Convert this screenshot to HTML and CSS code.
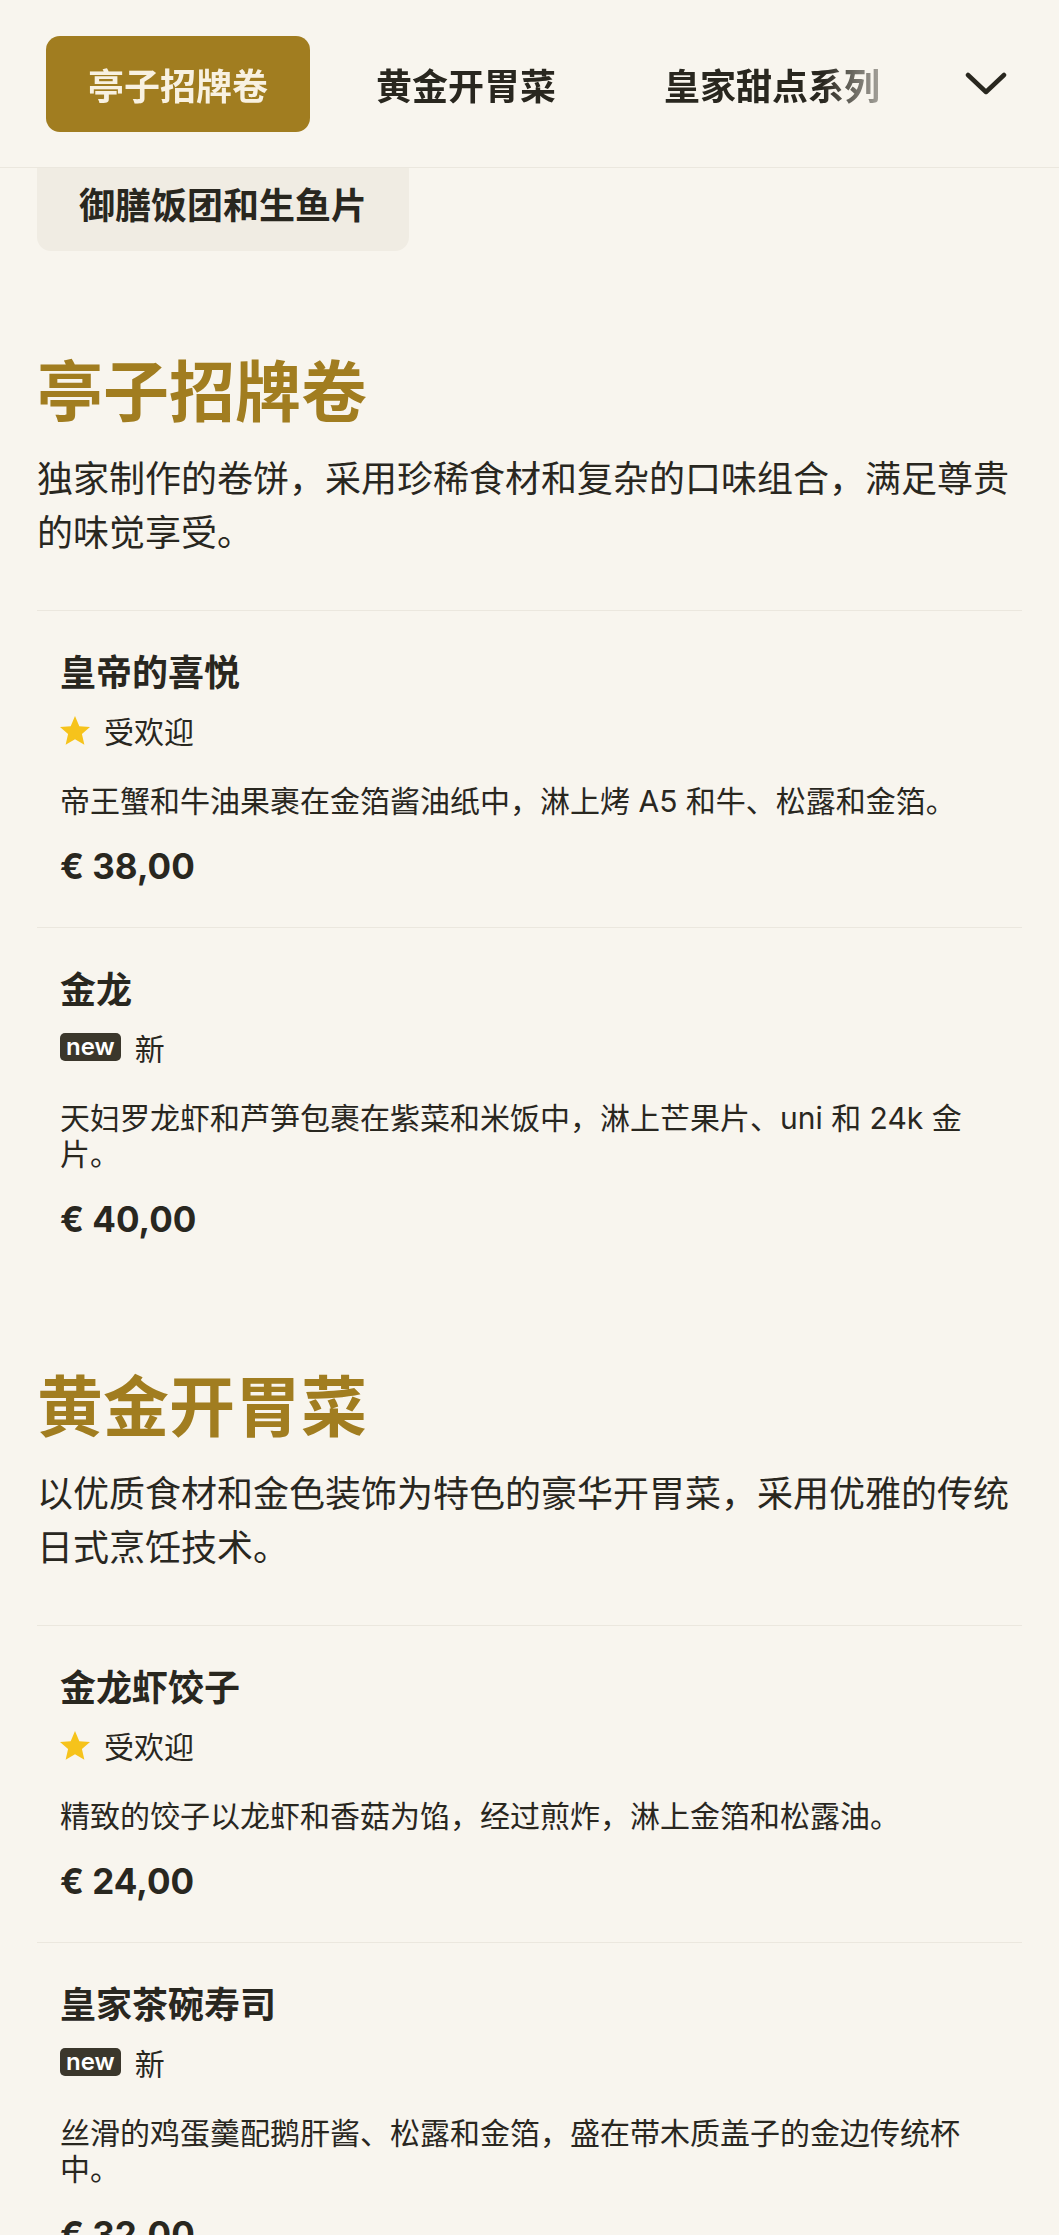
FILE: index.html
```html
<!DOCTYPE html>
<html lang="zh-CN">
  <head>
    <meta charset="UTF-8" />
    <meta name="viewport" content="width=device-width, initial-scale=1.0" />
    <title>菜单</title>
    <link rel="stylesheet" href="styles.css">
  </head>
  <body>
    <header class="menu-nav">
      <nav class="nav-tabs">
        <a class="nav-tab is-active" href="#signature">亭子招牌卷</a>
        <a class="nav-tab" href="#starters">黄金开胃菜</a>
        <a class="nav-tab" href="#desserts">皇家甜点系列</a>
      </nav>
      <button class="nav-toggle" type="button" aria-label="展开分类">
        <svg width="42" height="24" viewBox="0 0 42 24" aria-hidden="true">
          <polyline points="3,3 21,20 39,3" fill="none" stroke="currentColor" stroke-width="4.5" stroke-linecap="round" stroke-linejoin="round" />
        </svg>
      </button>
    </header>

    <main class="menu">
      <div class="category-chips">
        <a class="category-chip" href="#rice">御膳饭团和生鱼片</a>
      </div>

      <!-- signature rolls -->
      <section class="menu-section" id="signature">
        <h2 class="section-title">亭子招牌卷</h2>
        <p class="section-desc">独家制作的卷饼，采用珍稀食材和复杂的口味组合，满足尊贵的味觉享受。</p>

        <article class="menu-item">
          <h3 class="item-name">皇帝的喜悦</h3>
          <div class="item-tag">
            <svg class="star" width="30" height="29" viewBox="1.6 1.8 20.8 20" aria-hidden="true">
              <path d="M12 1.8l3 7 7.4.6-5.6 4.9 1.7 7.4L12 17.8l-6.5 3.9 1.7-7.4L1.6 9.4 9 8.8z" fill="#f6c31b" />
            </svg>
            <span>受欢迎</span>
          </div>
          <p class="item-desc">帝王蟹和牛油果裹在金箔酱油纸中，淋上烤 A5 和牛、松露和金箔。</p>
          <p class="item-price">€ 38,00</p>
        </article>

        <article class="menu-item">
          <h3 class="item-name">金龙</h3>
          <div class="item-tag">
            <span class="badge-new">new</span>
            <span>新</span>
          </div>
          <p class="item-desc">天妇罗龙虾和芦笋包裹在紫菜和米饭中，淋上芒果片、uni 和 24k 金片。</p>
          <p class="item-price">€ 40,00</p>
        </article>
      </section>

      <!-- starters -->
      <section class="menu-section" id="starters">
        <h2 class="section-title">黄金开胃菜</h2>
        <p class="section-desc">以优质食材和金色装饰为特色的豪华开胃菜，采用优雅的传统日式烹饪技术。</p>

        <article class="menu-item">
          <h3 class="item-name">金龙虾饺子</h3>
          <div class="item-tag">
            <svg class="star" width="30" height="29" viewBox="1.6 1.8 20.8 20" aria-hidden="true">
              <path d="M12 1.8l3 7 7.4.6-5.6 4.9 1.7 7.4L12 17.8l-6.5 3.9 1.7-7.4L1.6 9.4 9 8.8z" fill="#f6c31b" />
            </svg>
            <span>受欢迎</span>
          </div>
          <p class="item-desc">精致的饺子以龙虾和香菇为馅，经过煎炸，淋上金箔和松露油。</p>
          <p class="item-price">€ 24,00</p>
        </article>

        <article class="menu-item">
          <h3 class="item-name">皇家茶碗寿司</h3>
          <div class="item-tag">
            <span class="badge-new">new</span>
            <span>新</span>
          </div>
          <p class="item-desc">丝滑的鸡蛋羹配鹅肝酱、松露和金箔，盛在带木质盖子的金边传统杯中。</p>
          <p class="item-price">€ 32,00</p>
        </article>
      </section>
    </main>
  </body>
</html>
```

FILE: styles.css
```css
* {
  box-sizing: border-box;
}
body {
  margin: 0;
  background: #f8f5ee;
  color: #29271f;
  font-family: Inter, "Noto Sans CJK SC", sans-serif;
}
a {
  color: inherit;
  text-decoration: none;
}
h2,
h3,
p {
  margin: 0;
}

/* sticky category bar */
.menu-nav {
  position: sticky;
  top: 0;
  z-index: 2;
  display: flex;
  align-items: center;
  height: 168px;
  padding-left: 46px;
  background: #f8f5ee;
  border-bottom: 1px solid #ebe7de;
}
.nav-tabs {
  flex: 1;
  display: flex;
  gap: 24px;
  overflow: hidden;
  margin-right: 47px;
  -webkit-mask-image: linear-gradient(to right, #000 calc(100% - 95px), transparent);
  mask-image: linear-gradient(to right, #000 calc(100% - 95px), transparent);
}
.nav-tab {
  flex: none;
  display: flex;
  align-items: center;
  height: 96px;
  padding: 0 42px;
  border-radius: 14px;
  font-size: 36px;
  font-weight: 700;
  white-space: nowrap;
}
.nav-tab.is-active {
  background: #a17d20;
  color: #f8f1e1;
}
.nav-toggle {
  display: flex;
  align-items: center;
  justify-content: center;
  width: 42px;
  height: 42px;
  margin-right: 52px;
  padding: 0;
  border: 0;
  background: none;
  color: #29271f;
}

/* content */
.menu {
  padding: 0 37px;
}
.category-chips {
  display: flex;
  flex-wrap: wrap;
  gap: 24px;
  margin-top: -13px;
  padding-bottom: 14px;
}
.category-chip {
  display: flex;
  align-items: center;
  height: 96px;
  padding: 0 42px;
  border-radius: 14px;
  background: #f0ece3;
  font-size: 36px;
  font-weight: 700;
}
.menu-section {
  padding-top: 88px;
}
.section-title {
  font-size: 66px;
  line-height: 79px;
  font-weight: 700;
  color: #a17d20;
  margin-bottom: 20px;
}
.section-desc {
  font-size: 36px;
  line-height: 54px;
  margin-bottom: 50px;
}

.menu-item {
  padding: 41px 23px 39px;
  border-top: 1px solid #ebe7de;
}
.item-name {
  font-size: 36px;
  line-height: 43px;
  font-weight: 700;
  margin-bottom: 17px;
}
.item-tag {
  display: flex;
  align-items: center;
  gap: 14px;
  height: 36px;
  font-size: 30px;
  margin-bottom: 35px;
}
.star {
  display: block;
  flex: none;
}
.badge-new {
  display: inline-flex;
  align-items: center;
  height: 28px;
  padding: 0 6px;
  border-radius: 5px;
  background: #3b372c;
  color: #fff;
  font-size: 24px;
  font-weight: 600;
  line-height: 1;
}
.item-desc {
  font-size: 30px;
  line-height: 36px;
  margin-bottom: 26px;
}
.item-price {
  font-size: 35px;
  line-height: 43px;
  font-weight: 700;
}
```
